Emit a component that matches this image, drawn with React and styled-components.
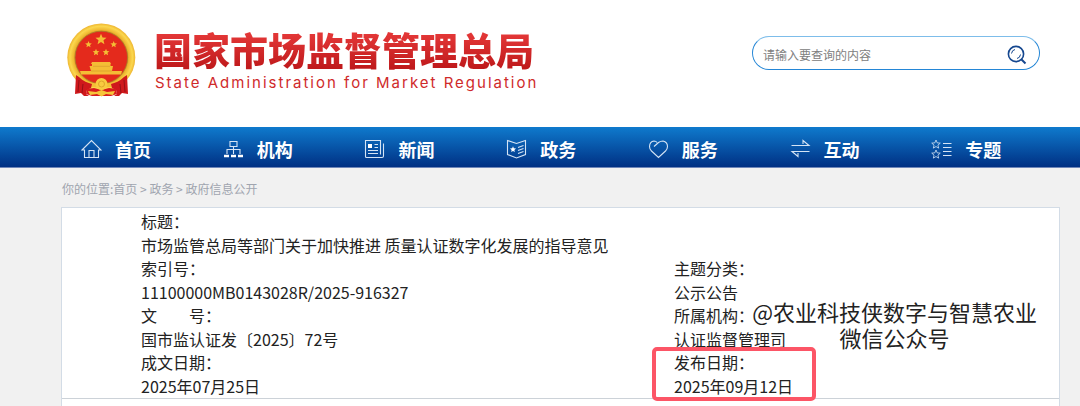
import styled, { createGlobalStyle } from 'styled-components'

const star = (cx, cy, r) => {
    const points = []
    for (let i = 0; i < 10; i++) {
        const radius = i % 2 ? r * 0.45 : r
        const a = (Math.PI / 5) * i - Math.PI / 2
        points.push(`${(cx + radius * Math.cos(a)).toFixed(2)},${(cy + radius * Math.sin(a)).toFixed(2)}`)
    }
    return points.join(' ')
}

const Emblem = () => (
    <svg width="69" height="75" viewBox="0 0 69 75" role="img" aria-label="国徽">
        <defs>
            <radialGradient id="gold" cx="50%" cy="50%" r="50%">
                <stop offset="76%" stopColor="#d09a24" />
                <stop offset="82%" stopColor="#f0b932" />
                <stop offset="92%" stopColor="#fbd74e" />
                <stop offset="100%" stopColor="#eeb530" />
            </radialGradient>
        </defs>
        <circle cx="34.3" cy="34.5" r="34" fill="url(#gold)" />
        <circle cx="34.3" cy="34.5" r="26.3" fill="#e42a1c" stroke="#a87a28" strokeWidth="0.8" />
        <g fill="#f4bd35">
            <polygon points={star(34, 16.5, 5.8)} />
            <polygon points={star(21.5, 21.5, 3.5)} />
            <polygon points={star(46.7, 21.5, 3.5)} />
            <polygon points={star(29, 29.3, 3.5)} />
            <polygon points={star(39, 29.3, 3.5)} />
            <path d="M25 39 H43 L44 41 H43.5 V43 H46 L45 48 H55 L54 51.5 H14 L13 48 H24 L22.5 43 H25 V41 H24 Z" />
            <path d="M11 53.5 C18 58 26 61 34.5 61 C43 61 51 58 58 53.5 L55 60 L46 64 H22 L13 60 Z" />
        </g>
        <path d="M26 43.3 H43 M24 48 H45" stroke="#d2982a" strokeWidth="0.6" />
        <path d="M9 52 L12 54 C16 58 21 60 25 61 L24 65 L20 67 L19 71 L22 73 L17 73 L14 70 L8 71 Z" fill="#cf181c" />
        <path d="M60 52 L57 54 C53 58 48 60 44 61 L45 65 L49 67 L50 71 L47 73 L52 73 L55 70 L61 71 Z" fill="#cf181c" />
        <path d="M12 57 L11 69 M16 61 L15 70 M57 57 L58 69 M53 61 L54 70" stroke="#980f15" strokeWidth="1" />
        <path d="M20 66 L27 65 L34.5 67 L42 65 L49 66 L50 71 L44 73 H25 L19 71 Z" fill="#d81c1c" />
        <circle cx="34.5" cy="61" r="6" fill="#f8cb40" />
        <circle cx="34.5" cy="61" r="3" fill="none" stroke="#e0a52a" strokeWidth="1" />
        <path d="M21 68 L29 69 L34.5 67 L40 69 L48 68 L46 72 L39 71 L34.5 73.5 L30 71 L23 72 Z" fill="#f6c53a" />
    </svg>
)

const HomeIcon = () => (
    <NavSvg viewBox="0 0 21 20">
        <path d="M1 11 L10.5 1.5 L20 11 H17.5 V18.5 H3.5 V11 Z M8 18.5 V11.5 H13 V18.5" />
    </NavSvg>
)

const OrgIcon = () => (
    <NavSvg viewBox="0 0 21 20">
        <path d="M7 2.5 H14 V7.5 H7 Z M10.5 7.5 V15 M4 15 V10.5 H17 V15" />
        <path d="M1 17 H6 M8 17 H13 M15 17 H20" strokeWidth="2.4" stroke="#fff" />
    </NavSvg>
)

const NewsIcon = () => (
    <NavSvg viewBox="0 0 21 20">
        <path d="M17 18.5 H2.5 Q1.5 18.5 1.5 17.5 V1.5 H16.5 V15.5 M19.5 4.5 V17 Q19.5 18.5 18 18.5 H15.5 M10.5 5.5 H14 M10.5 8.5 H14 M4 11.5 H14 M4 14.5 H14" />
        <rect x="4" y="5" width="4" height="4" fill="#fff" stroke="none" />
    </NavSvg>
)

const PolicyIcon = () => (
    <NavSvg viewBox="0 0 21 20">
        <path d="M1.5 1.5 L10.5 4.5 L19.5 1.5 V15.5 L10.5 19 L1.5 15.5 Z M12 8.5 L17.5 6.5 M12 11.5 L17.5 9.5 M12 14.5 L17.5 12.5" />
        <polygon points={star(7, 10.5, 3.2)} fill="#fff" stroke="none" />
    </NavSvg>
)

const HeartIcon = () => (
    <NavSvg viewBox="0 0 21 20">
        <path d="M6 7.5 L10.5 3.5 Q12.5 2 15 2 Q19.5 3 19.5 7.5 Q19.5 10 17.5 12 L10.5 18.5 L3.5 12 Q1.5 10 1.5 7.5 Q1.8 2.5 6 2 Q8 2 9 3.5" />
    </NavSvg>
)

const SwapIcon = () => (
    <NavSvg viewBox="0 0 21 20">
        <path d="M1.5 6.5 H19 L13 1.5 V5 M19.5 12.5 H2 L8 17.5 V14" />
    </NavSvg>
)

const TopicIcon = () => (
    <NavSvg viewBox="0 0 21 20">
        <polygon points={star(5, 5.5, 4.5)} strokeWidth="0.8" />
        <polygon points={star(5, 15.5, 4.5)} strokeWidth="0.8" />
        <path d="M12 4.5 H20.5 M12 8.5 H20.5 M12 12.5 H20.5 M12 16.5 H20.5" />
    </NavSvg>
)

const SearchIcon = () => (
    <svg width="20" height="20" viewBox="0 0 20 20" fill="none" stroke="#15478f">
        <circle cx="9" cy="9" r="7.6" strokeWidth="1.6" />
        <path d="M14.5 14.5 L18.5 18.5" strokeWidth="2" />
        <path d="M4.5 8.5 Q5 5 8 4.5 M13.5 9.5 Q13 13 10 13.5" strokeWidth="1" />
    </svg>
)

const navItems = [
    { label: '首页', Icon: HomeIcon },
    { label: '机构', Icon: OrgIcon },
    { label: '新闻', Icon: NewsIcon },
    { label: '政务', Icon: PolicyIcon },
    { label: '服务', Icon: HeartIcon },
    { label: '互动', Icon: SwapIcon },
    { label: '专题', Icon: TopicIcon },
]

const fields = [
    { label: '标题：', value: '市场监管总局等部门关于加快推进 质量认证数字化发展的指导意见', wide: true },
    { label: '索引号：', value: '11100000MB0143028R/2025-916327' },
    { label: '主题分类：', value: '公示公告' },
    { label: '文\u3000\u3000号：', value: '国市监认证发〔2025〕72号' },
    { label: '所属机构：', value: '认证监督管理司' },
    { label: '成文日期：', value: '2025年07月25日' },
    { label: '发布日期：', value: '2025年09月12日', marked: true },
]

const App = () => {
    return (
        <>
            <GlobalStyle />
            <Header>
                <Brand>
                    <Emblem />
                    <BrandText>
                        <h1>国家市场监督管理总局</h1>
                        <p>State Administration for Market Regulation</p>
                    </BrandText>
                </Brand>
                <Search role="search" onSubmit={(e) => e.preventDefault()}>
                    <input type="text" aria-label="请输入要查询的内容" placeholder="请输入要查询的内容" />
                    <button type="submit" aria-label="搜索"><SearchIcon /></button>
                </Search>
            </Header>

            <Nav>
                {
                    navItems.map(({ label, Icon }) => (
                        <NavLink key={label} href="#">
                            <Icon />
                            {label}
                        </NavLink>
                    ))
                }
            </Nav>

            <Content>
                <Breadcrumb aria-label="你的位置">
                    你的位置:<a href="#">首页</a> &gt; <a href="#">政务</a> &gt; <a href="#">政府信息公开</a>
                </Breadcrumb>

                <Card>
                    <Fields>
                        {
                            fields.map(({ label, value, wide, marked }) => (
                                <Field key={label} $wide={wide} $marked={marked}>
                                    <dt>{label}</dt>
                                    <dd>{value}</dd>
                                </Field>
                            ))
                        }
                    </Fields>
                    <Watermark>
                        <span>@农业科技侠数字与智慧农业</span>
                        <span>微信公众号</span>
                    </Watermark>
                </Card>
            </Content>
        </>
    )
}

export default App

const GlobalStyle = createGlobalStyle`
    *, *::after {
        box-sizing: border-box;
        margin: 0;
        padding: 0;
    }

    html {
        height: 100%;
    }

    body, #root {
        display: flex;
        flex-direction: column;
    }

    body {
        height: 100%;
        overflow: hidden;
        background: #fff;
        color: #222;
        font-family: "Noto Sans CJK SC", sans-serif;
    }

    #root {
        flex: 1;
    }

    a {
        color: inherit;
        text-decoration: none;
    }
`

const Header = styled.header`
    display: flex;
    justify-content: space-between;
    align-items: flex-start;
    padding: 23px 40px 29px 67px;
`

const Brand = styled.div`
    display: flex;
    gap: 18px;
`

const BrandText = styled.div`
    padding-top: 3px;
    white-space: nowrap;

    > h1 {
        font-size: 38px;
        line-height: 46px;
        font-weight: 900;
        color: transparent;
        background: linear-gradient(#e23636 20%, #c01a1c 90%);
        background-clip: text;
    }

    > p {
        padding-left: 1px;
        font-family: Inter, Arial, sans-serif;
        font-size: 15px;
        line-height: 22px;
        letter-spacing: 2px;
        color: #cf2a2a;
    }
`

const Search = styled.form`
    display: flex;
    align-items: center;
    width: 288px;
    height: 34px;
    margin-top: 13px;
    padding: 3px 12px 0 10px;
    border: 1px solid #2486d6;
    border-top-color: #7dbdea;
    border-radius: 17px;

    > input {
        flex: 1;
        min-width: 0;
        border: 0;
        outline: 0;
        background: none;
        font-family: inherit;
        font-size: 12px;
    }

    > input::placeholder {
        color: #808080;
    }

    > button {
        display: flex;
        border: 0;
        background: none;
        cursor: pointer;
    }
`

const Nav = styled.nav`
    display: grid;
    grid-template-columns: repeat(7, 1fr);
    height: 41px;
    padding: 0 27px 0 61px;
    border-bottom: 1px solid #6f86b8;
    background: linear-gradient(#0f7acd, #003083);
`

const NavLink = styled.a`
    display: flex;
    align-items: center;
    gap: 13px;
    padding: 4px 0 0 20px;
    color: #fff;
    font-size: 18px;
    font-weight: 700;
`

const NavSvg = styled.svg`
    width: 21px;
    height: 20px;
    fill: none;
    stroke: #d5e4f5;
    stroke-width: 1.1;
`

const Content = styled.main`
    display: flex;
    flex-direction: column;
    flex: 1;
    padding: 0 20px 0 61px;
    background: #f1f1f1;
`

const Breadcrumb = styled.nav`
    padding: 11px 1px 8px;
    font-size: 12px;
    line-height: 20px;
    color: #a0a5af;
`

const Card = styled.section`
    position: relative;
    flex: 1;
    border: 1px solid #d3dce6;
    border-bottom: 0;
    background: #fff;
`

const Fields = styled.dl`
    display: grid;
    grid-template-columns: 533px 1fr;
    padding: 2px 0 0 79px;
    border-bottom: 1px solid #ccd2d8;
`

const Field = styled.div`
    position: relative;
    grid-column: ${({ $wide }) => ($wide ? '1 / -1' : 'auto')};
    font-size: 16px;

    > dt {
        line-height: 23px;
    }

    > dd {
        line-height: 24px;
    }

    &::after {
        content: "";
        display: ${({ $marked }) => ($marked ? 'block' : 'none')};
        position: absolute;
        top: -4px;
        left: -22px;
        width: 164px;
        height: 54px;
        border: 4px solid #fc5566;
        border-radius: 5px;
    }
`

/* sits over the record, like a stamp */
const Watermark = styled.p`
    position: absolute;
    top: 90px;
    right: 22px;
    display: flex;
    flex-direction: column;
    align-items: center;
    font-size: 22px;
    font-weight: 400;
    line-height: 26px;
    color: #222;
    pointer-events: none;
`
